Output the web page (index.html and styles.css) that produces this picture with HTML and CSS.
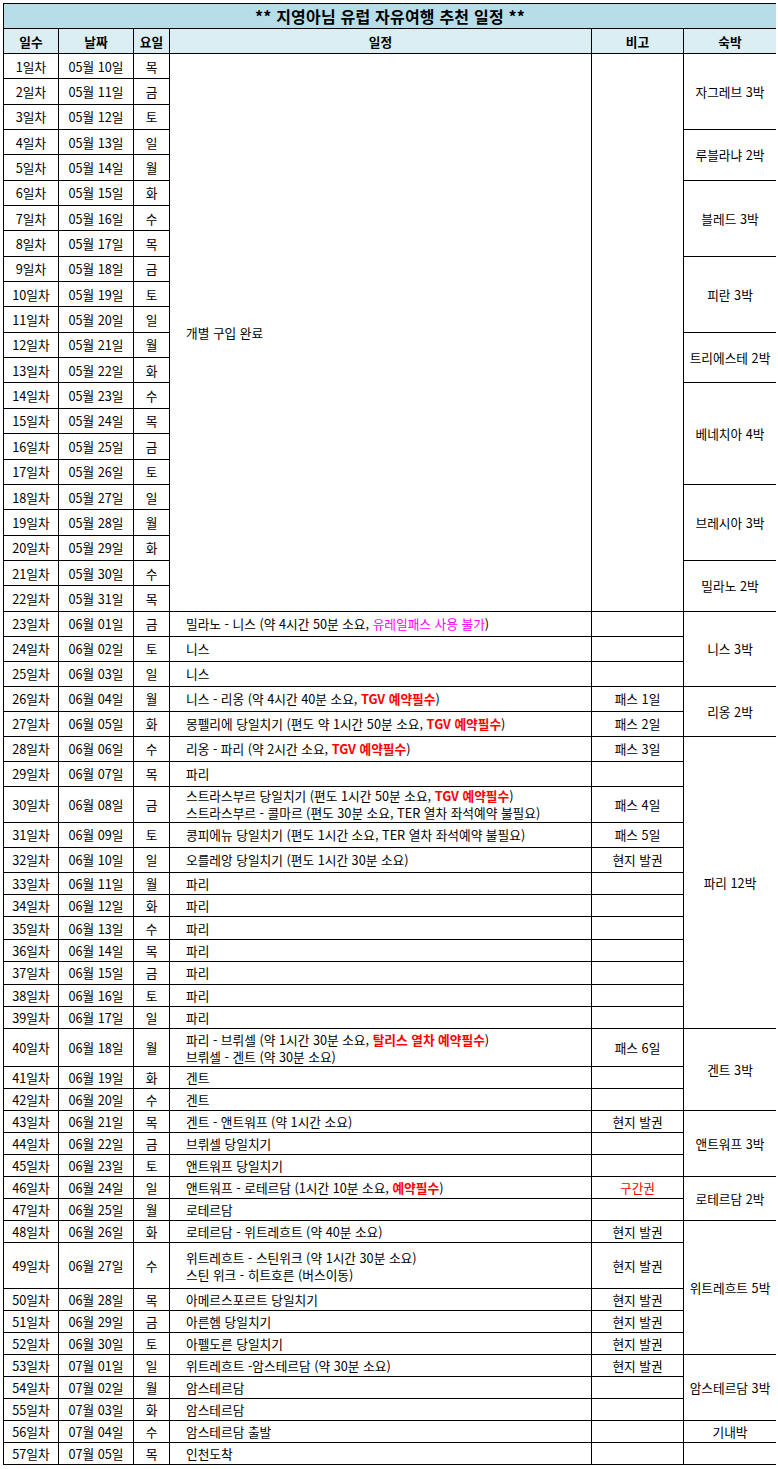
FILE: index.html
```html
<!DOCTYPE html>
<html lang="ko">
<head>
<meta charset="utf-8">
<title>지영아님 유럽 자유여행 추천 일정</title>
<link rel="stylesheet" href="styles.css">
</head>
<body>
<table class="sched">
<colgroup>
<col class="w-day"><col class="w-date"><col class="w-wd"><col class="w-plan"><col class="w-note"><col class="w-stay">
</colgroup>
<thead>
<tr class="h-title"><th colspan="6" class="title">** 지영아님 유럽 자유여행 추천 일정 **</th></tr>
<tr class="h-head"><th>일수</th><th>날짜</th><th>요일</th><th>일정</th><th>비고</th><th>숙박</th></tr>
</thead>
<tbody>
<tr class="ra"><td>1일차</td><td>05월 10일</td><td>목</td><td class="plan" rowspan="22">개별 구입 완료</td><td rowspan="22"></td><td rowspan="3">자그레브 3박</td></tr>
<tr class="ra"><td>2일차</td><td>05월 11일</td><td>금</td></tr>
<tr class="ra"><td>3일차</td><td>05월 12일</td><td>토</td></tr>
<tr class="ra"><td>4일차</td><td>05월 13일</td><td>일</td><td rowspan="2">루블라냐 2박</td></tr>
<tr class="ra"><td>5일차</td><td>05월 14일</td><td>월</td></tr>
<tr class="ra"><td>6일차</td><td>05월 15일</td><td>화</td><td rowspan="3">블레드 3박</td></tr>
<tr class="ra"><td>7일차</td><td>05월 16일</td><td>수</td></tr>
<tr class="ra"><td>8일차</td><td>05월 17일</td><td>목</td></tr>
<tr class="ra"><td>9일차</td><td>05월 18일</td><td>금</td><td rowspan="3">피란 3박</td></tr>
<tr class="ra"><td>10일차</td><td>05월 19일</td><td>토</td></tr>
<tr class="ra"><td>11일차</td><td>05월 20일</td><td>일</td></tr>
<tr class="ra"><td>12일차</td><td>05월 21일</td><td>월</td><td rowspan="2">트리에스테 2박</td></tr>
<tr class="ra"><td>13일차</td><td>05월 22일</td><td>화</td></tr>
<tr class="ra"><td>14일차</td><td>05월 23일</td><td>수</td><td rowspan="4">베네치아 4박</td></tr>
<tr class="ra"><td>15일차</td><td>05월 24일</td><td>목</td></tr>
<tr class="ra"><td>16일차</td><td>05월 25일</td><td>금</td></tr>
<tr class="ra"><td>17일차</td><td>05월 26일</td><td>토</td></tr>
<tr class="ra"><td>18일차</td><td>05월 27일</td><td>일</td><td rowspan="3">브레시아 3박</td></tr>
<tr class="ra"><td>19일차</td><td>05월 28일</td><td>월</td></tr>
<tr class="ra"><td>20일차</td><td>05월 29일</td><td>화</td></tr>
<tr class="ra"><td>21일차</td><td>05월 30일</td><td>수</td><td rowspan="2">밀라노 2박</td></tr>
<tr class="ra"><td>22일차</td><td>05월 31일</td><td>목</td></tr>

<tr class="rb"><td>23일차</td><td>06월 01일</td><td>금</td><td class="plan">밀라노 - 니스 (약 4시간 50분 소요, <span class="pink">유레일패스 사용 불가</span>)</td><td></td><td rowspan="3">니스 3박</td></tr>
<tr class="rb"><td>24일차</td><td>06월 02일</td><td>토</td><td class="plan">니스</td><td></td></tr>
<tr class="rb"><td>25일차</td><td>06월 03일</td><td>일</td><td class="plan">니스</td><td></td></tr>
<tr class="rb"><td>26일차</td><td>06월 04일</td><td>월</td><td class="plan">니스 - 리옹 (약 4시간 40분 소요, <span class="red">TGV 예약필수</span>)</td><td>패스 1일</td><td rowspan="2">리옹 2박</td></tr>
<tr class="rb"><td>27일차</td><td>06월 05일</td><td>화</td><td class="plan">몽펠리에 당일치기 (편도 약 1시간 50분 소요, <span class="red">TGV 예약필수</span>)</td><td>패스 2일</td></tr>
<tr class="rb"><td>28일차</td><td>06월 06일</td><td>수</td><td class="plan">리옹 - 파리 (약 2시간 소요, <span class="red">TGV 예약필수</span>)</td><td>패스 3일</td><td rowspan="12">파리 12박</td></tr>
<tr class="rb"><td>29일차</td><td>06월 07일</td><td>목</td><td class="plan">파리</td><td></td></tr>
<tr class="r36"><td>30일차</td><td>06월 08일</td><td>금</td><td class="plan">스트라스부르 당일치기 (편도 1시간 50분 소요, <span class="red">TGV 예약필수</span>)<br>스트라스부르 - 콜마르 (편도 30분 소요, TER 열차 좌석예약 불필요)</td><td>패스 4일</td></tr>
<tr class="rb"><td>31일차</td><td>06월 09일</td><td>토</td><td class="plan">콩피에뉴 당일치기 (편도 1시간 소요, TER 열차 좌석예약 불필요)</td><td>패스 5일</td></tr>
<tr class="rb"><td>32일차</td><td>06월 10일</td><td>일</td><td class="plan">오를레앙 당일치기 (편도 1시간 30분 소요)</td><td>현지 발권</td></tr>
<tr class="rc"><td>33일차</td><td>06월 11일</td><td>월</td><td class="plan">파리</td><td></td></tr>
<tr class="rc"><td>34일차</td><td>06월 12일</td><td>화</td><td class="plan">파리</td><td></td></tr>
<tr class="rc"><td>35일차</td><td>06월 13일</td><td>수</td><td class="plan">파리</td><td></td></tr>
<tr class="rc"><td>36일차</td><td>06월 14일</td><td>목</td><td class="plan">파리</td><td></td></tr>
<tr class="rc"><td>37일차</td><td>06월 15일</td><td>금</td><td class="plan">파리</td><td></td></tr>
<tr class="rc"><td>38일차</td><td>06월 16일</td><td>토</td><td class="plan">파리</td><td></td></tr>
<tr class="rc"><td>39일차</td><td>06월 17일</td><td>일</td><td class="plan">파리</td><td></td></tr>
<tr class="r38"><td>40일차</td><td>06월 18일</td><td>월</td><td class="plan">파리 - 브뤼셀 (약 1시간 30분 소요, <span class="red">탈리스 열차 예약필수</span>)<br>브뤼셀 - 겐트 (약 30분 소요)</td><td>패스 6일</td><td rowspan="3">겐트 3박</td></tr>
<tr class="rd"><td>41일차</td><td>06월 19일</td><td>화</td><td class="plan">겐트</td><td></td></tr>
<tr class="rd"><td>42일차</td><td>06월 20일</td><td>수</td><td class="plan">겐트</td><td></td></tr>
<tr class="rd"><td>43일차</td><td>06월 21일</td><td>목</td><td class="plan">겐트 - 앤트워프 (약 1시간 소요)</td><td>현지 발권</td><td rowspan="3">앤트워프 3박</td></tr>
<tr class="rd"><td>44일차</td><td>06월 22일</td><td>금</td><td class="plan">브뤼셀 당일치기</td><td></td></tr>
<tr class="rd"><td>45일차</td><td>06월 23일</td><td>토</td><td class="plan">앤트워프 당일치기</td><td></td></tr>
<tr class="rd"><td>46일차</td><td>06월 24일</td><td>일</td><td class="plan">앤트워프 - 로테르담 (1시간 10분 소요, <span class="red">예약필수</span>)</td><td class="red-plain">구간권</td><td rowspan="2">로테르담 2박</td></tr>
<tr class="rd"><td>47일차</td><td>06월 25일</td><td>월</td><td class="plan">로테르담</td><td></td></tr>
<tr class="rd"><td>48일차</td><td>06월 26일</td><td>화</td><td class="plan">로테르담 - 위트레흐트 (약 40분 소요)</td><td>현지 발권</td><td rowspan="5">위트레흐트 5박</td></tr>
<tr class="r46"><td>49일차</td><td>06월 27일</td><td>수</td><td class="plan">위트레흐트 - 스틴위크 (약 1시간 30분 소요)<br>스틴 위크 - 히트호른 (버스이동)</td><td>현지 발권</td></tr>
<tr class="rd"><td>50일차</td><td>06월 28일</td><td>목</td><td class="plan">아메르스포르트 당일치기</td><td>현지 발권</td></tr>
<tr class="rd"><td>51일차</td><td>06월 29일</td><td>금</td><td class="plan">아른헴 당일치기</td><td>현지 발권</td></tr>
<tr class="rd"><td>52일차</td><td>06월 30일</td><td>토</td><td class="plan">아펠도른 당일치기</td><td>현지 발권</td></tr>
<tr class="rd"><td>53일차</td><td>07월 01일</td><td>일</td><td class="plan">위트레흐트 -암스테르담 (약 30분 소요)</td><td>현지 발권</td><td rowspan="3">암스테르담 3박</td></tr>
<tr class="rd"><td>54일차</td><td>07월 02일</td><td>월</td><td class="plan">암스테르담</td><td></td></tr>
<tr class="rd"><td>55일차</td><td>07월 03일</td><td>화</td><td class="plan">암스테르담</td><td></td></tr>
<tr class="rd"><td>56일차</td><td>07월 04일</td><td>수</td><td class="plan">암스테르담 출발</td><td></td><td>기내박</td></tr>
<tr class="rd"><td>57일차</td><td>07월 05일</td><td>목</td><td class="plan">인천도착</td><td></td><td></td></tr>
</tbody>
</table>
</body>
</html>
```

FILE: styles.css
```css
html, body {
  background: #ffffff;
}
body {
  margin: 3px 2px 0 3px;
  font-family: "Noto Sans CJK KR", "Noto Sans", sans-serif;
  font-size: 12.7px;
  color: #000000;
}
.sched {
  border-collapse: collapse;
  table-layout: fixed;
  width: 773px;
}
.w-day { width: 55px; }
.w-date { width: 75px; }
.w-wd { width: 36px; }
.w-plan { width: 422px; }
.w-note { width: 92px; }
.w-stay { width: 93px; }

.sched th,
.sched td {
  border: 1px solid #000000;
  padding: 0;
  text-align: center;
  vertical-align: middle;
  line-height: 17px;
  white-space: nowrap;
  overflow: hidden;
}
.h-title { height: 25px; }
.h-head { height: 25px; }
.title {
  background: #b7dde8;
  font-size: 16px;
  font-weight: bold;
  letter-spacing: 0.2px;
}
.h-head th {
  background: #daeef3;
  font-weight: bold;
}
.sched td.plan {
  text-align: left;
  padding-left: 16px;
}
.ra { height: 25.35px; }
.rb { height: 25px; }
.r36 { height: 36px; }
.rc { height: 22.4px; }
.r38 { height: 38px; }
.rd { height: 22px; }
.r46 { height: 46px; }

.red {
  color: #ff0000;
  font-weight: bold;
}
.red-plain {
  color: #ff0000;
}
.pink {
  color: #ff00ff;
}
```
